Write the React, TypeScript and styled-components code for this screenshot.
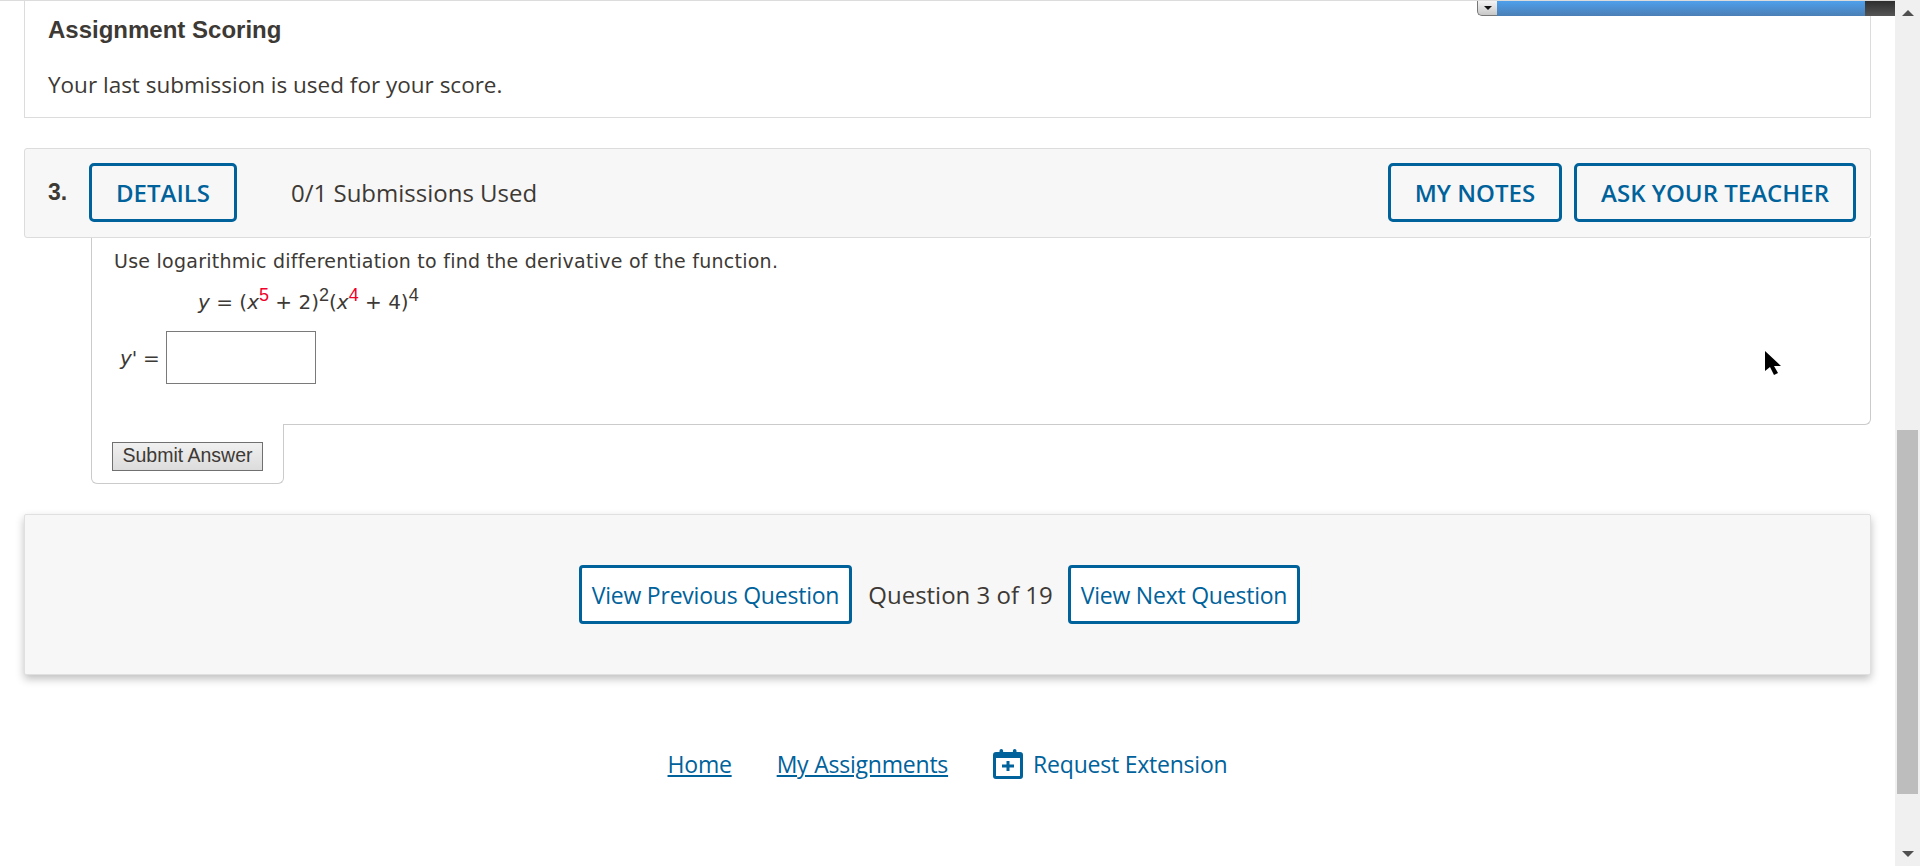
import React from 'react'
import styled, { createGlobalStyle } from 'styled-components'

const blue = '#00629b'
const ink = '#3d3935'

const GlobalStyle = createGlobalStyle`
  html, body {
    margin: 0;
    padding: 0;
    height: 866px;
    overflow: hidden;
    background: #fff;
  }
`

const Page = styled.div`
  position: relative;
  display: flex;
  width: 1920px;
  height: 866px;
  overflow: hidden;
  font-family: 'Open Sans', sans-serif;
  color: ${ink};
`

const Main = styled.main`
  flex: 1;
  min-width: 0;
  border-top: 1px solid #dcdcdc;
  padding: 0 24px;
`

const ScoringCard = styled.section`
  height: 117px;
  box-sizing: border-box;
  padding: 14px 23px 0;
  border: 1px solid #dcdcdc;
  border-top: 0;
`

const ScoringTitle = styled.h2`
  margin: 0;
  font: 700 24px/29px 'Liberation Sans', Arial, sans-serif;
  color: ${ink};
`

const ScoringText = styled.p`
  margin: 26px 0 0;
  font-size: 22.5px;
  line-height: 30px;
`

const QuestionHeader = styled.header`
  display: flex;
  align-items: center;
  height: 90px;
  box-sizing: border-box;
  margin-top: 30px;
  padding: 0 14px 1px 23px;
  background: #f7f7f7;
  border: 1px solid #dcdcdc;
  border-radius: 3px;
`

const QuestionNumber = styled.span`
  width: 41px;
  font: 700 23px 'Liberation Sans', Arial, sans-serif;
  color: ${ink};
`

const OutlineButton = styled.button<{ $gap?: number }>`
  height: 59px;
  box-sizing: border-box;
  margin-left: ${(p) => p.$gap ?? 0}px;
  padding: 0 24px;
  background: transparent;
  border: 3px solid ${blue};
  border-radius: 5px;
  font: 600 24px 'Open Sans', sans-serif;
  color: ${blue};
`

const Submissions = styled.span`
  flex: 1;
  margin-left: 54px;
  font-size: 24px;
`

const QuestionBody = styled.div`
  height: 187px;
  box-sizing: border-box;
  margin-left: 67px;
  padding: 11px 0 0 22px;
  border: 1px solid #cbcbcb;
  border-top: 0;
  border-radius: 0 0 6px 0;
  font: 20px/24px 'DejaVu Sans', Verdana, sans-serif;
`

const Prompt = styled.p`
  margin: 0;
  font-size: 19px;
  letter-spacing: 0.25px;
`

const Formula = styled.div`
  margin: 17px 0 0 84px;
`

const Var = styled.i`
  font-style: italic;
`

const Exp = styled.sup<{ $red?: boolean }>`
  font-size: 18px;
  line-height: 0;
  font-family: 'Liberation Sans', Arial, sans-serif;
  color: ${(p) => (p.$red ? '#f0002a' : ink)};
`

const AnswerRow = styled.div`
  display: flex;
  align-items: center;
  margin: 17px 0 0 6px;
`

const AnswerLabel = styled.label`
  width: 46px;
  white-space: nowrap;
  letter-spacing: -0.2px;
`

const AnswerInput = styled.input`
  width: 150px;
  height: 53px;
  box-sizing: border-box;
  border: 1px solid #7a7a7a;
  background: #fff;
`

const SubmitTab = styled.div`
  width: 193px;
  height: 60px;
  box-sizing: border-box;
  margin: -1px 0 0 67px;
  padding: 18px 0 0 20px;
  background: #fff;
  border: 1px solid #cbcbcb;
  border-top: 0;
  border-radius: 0 0 6px 6px;
  position: relative;
`

const SubmitButton = styled.button`
  display: block;
  width: 151px;
  height: 29px;
  box-sizing: border-box;
  padding: 0 0 2px;
  background: linear-gradient(#f0f0f0, #dcdcdc);
  border: 1px solid #707070;
  font: 19.5px 'Liberation Sans', Arial, sans-serif;
  color: ${ink};
`

const NavPanel = styled.nav`
  display: flex;
  justify-content: center;
  align-items: center;
  gap: 15px;
  height: 161px;
  box-sizing: border-box;
  margin-top: 30px;
  padding-right: 16px;
  background: #f7f7f7;
  border: 1px solid #e0e0e0;
  border-radius: 2px;
  box-shadow: 0 4px 8px rgba(0, 0, 0, 0.25);
  font-size: 24px;
`

const NavButton = styled.button`
  height: 59px;
  box-sizing: border-box;
  padding: 0 10px;
  background: #fff;
  border: 3px solid ${blue};
  border-radius: 4px;
  font: 400 23px 'Open Sans', sans-serif;
  letter-spacing: -0.22px;
  color: ${blue};
`

const NavLabel = styled.span`
  margin-left: 1px;
`

const Footer = styled.footer`
  display: flex;
  justify-content: center;
  align-items: center;
  gap: 45px;
  margin-top: 70px;
  font-size: 23px;
  letter-spacing: -0.22px;
  line-height: 38px;
`

const FooterLink = styled.a<{ $plain?: boolean }>`
  display: inline-flex;
  align-items: center;
  gap: 10px;
  color: ${blue};
  text-decoration: ${(p) => (p.$plain ? 'none' : 'underline')};
`

const Scrollbar = styled.div`
  display: flex;
  flex-direction: column;
  align-items: center;
  width: 25px;
  background: #f0f0f0;
`

const ArrowSlot = styled.div`
  height: 25px;
  display: flex;
  align-items: center;
  justify-content: center;
`

const Track = styled.div`
  flex: 1;
  display: flex;
  flex-direction: column;
  justify-content: flex-end;
  width: 21px;
`

const Thumb = styled.div`
  height: 364px;
  margin-bottom: 47px;
  background: #bdbdbd;
`

const Arrow = styled.span<{ $down?: boolean }>`
  width: 0;
  height: 0;
  border-left: 6px solid transparent;
  border-right: 6px solid transparent;
  ${(p) =>
    p.$down ? 'border-top: 6px solid #505050;' : 'border-bottom: 6px solid #505050;'}
`

// leftover player bar sitting over the top of the page
const FloatBar = styled.div`
  position: absolute;
  top: 1px;
  left: 1477px;
  display: flex;
  height: 15px;
  width: 418px;
`

const FloatHandle = styled.div`
  display: flex;
  align-items: center;
  justify-content: center;
  width: 20px;
  box-sizing: border-box;
  background: linear-gradient(#f4f4f4, #c8c8c8);
  border: 1px solid #777;
  border-top: 0;
  border-right: 0;
  border-radius: 0 0 0 5px;
`

const FloatCaret = styled.span`
  width: 0;
  height: 0;
  border-left: 4px solid transparent;
  border-right: 4px solid transparent;
  border-top: 4px solid #111;
`

const FloatBlue = styled.div`
  flex: 1;
  background: linear-gradient(#4f9fec, #4a7fb5);
`

const FloatDark = styled.div`
  width: 30px;
  background: linear-gradient(#2e2e2e, #555);
`

const Cursor = styled.svg`
  position: absolute;
  left: 1764px;
  top: 351px;
`

const CalendarPlus = () => (
  <svg width="30" height="30" viewBox="0 0 30 30" aria-hidden="true">
    <path
      fill={blue}
      d="M3 3h3.500V1.800a1.800 1.800 0 0 1 3.600 0V3h9.800V1.800a1.800 1.800 0 0 1 3.600 0V3H27a3 3 0 0 1 3 3v21a3 3 0 0 1-3 3H3a3 3 0 0 1-3-3V6a3 3 0 0 1 3-3z"
    />
    <rect x="3" y="9" width="24" height="18" fill="#fff" />
    <path fill={blue} d="M13.500 12h3v3.500H21v3h-4.500V22h-3v-3.500H9v-3h4.500z" />
  </svg>
)

export default function App() {
  return (
    <Page>
      <GlobalStyle />
      <Main>
        <ScoringCard>
          <ScoringTitle>Assignment Scoring</ScoringTitle>
          <ScoringText>Your last submission is used for your score.</ScoringText>
        </ScoringCard>

        <QuestionHeader>
          <QuestionNumber>3.</QuestionNumber>
          <OutlineButton>DETAILS</OutlineButton>
          <Submissions>0/1 Submissions Used</Submissions>
          <OutlineButton>MY NOTES</OutlineButton>
          <OutlineButton $gap={12}>ASK YOUR TEACHER</OutlineButton>
        </QuestionHeader>

        <QuestionBody>
          <Prompt>Use logarithmic differentiation to find the derivative of the function.</Prompt>
          <Formula>
            <Var>y</Var> = (<Var>x</Var>
            <Exp $red>5</Exp> + 2)<Exp>2</Exp>(<Var>x</Var>
            <Exp $red>4</Exp> + 4)<Exp>4</Exp>
          </Formula>
          <AnswerRow>
            <AnswerLabel>
              <Var>y</Var>' =
            </AnswerLabel>
            <AnswerInput type="text" />
          </AnswerRow>
        </QuestionBody>
        <SubmitTab>
          <SubmitButton>Submit Answer</SubmitButton>
        </SubmitTab>

        <NavPanel>
          <NavButton>View Previous Question</NavButton>
          <NavLabel>Question 3 of 19</NavLabel>
          <NavButton>View Next Question</NavButton>
        </NavPanel>

        <Footer>
          <FooterLink href="#">Home</FooterLink>
          <FooterLink href="#">My Assignments</FooterLink>
          <FooterLink href="#" $plain>
            <CalendarPlus />
            Request Extension
          </FooterLink>
        </Footer>
      </Main>

      <Scrollbar>
        <ArrowSlot>
          <Arrow />
        </ArrowSlot>
        <Track>
          <Thumb />
        </Track>
        <ArrowSlot>
          <Arrow $down />
        </ArrowSlot>
      </Scrollbar>

      <FloatBar>
        <FloatHandle>
          <FloatCaret />
        </FloatHandle>
        <FloatBlue />
        <FloatDark />
      </FloatBar>

      <Cursor width="18" height="26" viewBox="0 0 18 26" aria-hidden="true">
        <path fill="#000" d="M1 0v20l5-4 4 8 4-2-4-7h7z" />
      </Cursor>
    </Page>
  )
}
